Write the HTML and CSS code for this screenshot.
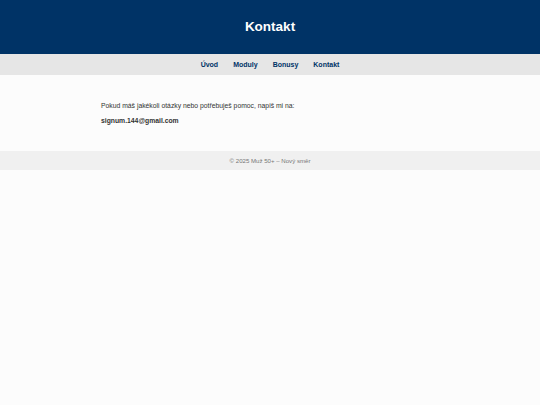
FILE: index.html
```html
<!DOCTYPE html>
<html lang="cs">
<head>
<meta charset="utf-8">
<title>Kontakt</title>
<link rel="stylesheet" href="styles.css">
</head>
<body>
<header class="site-header">
  <h1 class="title">Kontakt</h1>
</header>
<nav class="nav">
  <a href="#">Úvod</a>
  <a href="#">Moduly</a>
  <a href="#">Bonusy</a>
  <a href="#">Kontakt</a>
</nav>
<main class="content">
  <p class="intro">Pokud máš jakékoli otázky nebo potřebuješ pomoc, napiš mi na:</p>
  <p class="email">signum.144@gmail.com</p>
</main>
<footer class="footer">© 2025 Muž 50+ – Nový směr</footer>
</body>
</html>
```
FILE: styles.css
```css
html, body {
  margin: 0;
  padding: 0;
}
body {
  background: #fcfcfc;
  font-family: "Liberation Sans", Arial, sans-serif;
  color: #333;
}
.site-header {
  background: #003366;
  height: 54px;
  display: flex;
  align-items: center;
  justify-content: center;
}
.title {
  margin: 0 0 2px;
  color: #fff;
  font-size: 13.5px;
  font-weight: bold;
}
.nav {
  background: #e6e6e6;
  height: 21px;
  display: flex;
  align-items: center;
  justify-content: center;
  gap: 15px;
}
.nav a {
  color: #003366;
  text-decoration: none;
  font-weight: bold;
  font-size: 7px;
}
.content {
  width: 338px;
  margin: 0 auto;
  padding: 26px 0 26px;
  box-sizing: border-box;
}
.content p {
  margin: 0;
  font-size: 6.8px;
  line-height: 9px;
}
.intro {
  margin-bottom: 6px !important;
}
.email {
  font-weight: bold;
}
.footer {
  background: #f0f0f0;
  height: 19px;
  display: flex;
  align-items: center;
  justify-content: center;
  font-size: 6.1px;
  color: #777;
}
```
